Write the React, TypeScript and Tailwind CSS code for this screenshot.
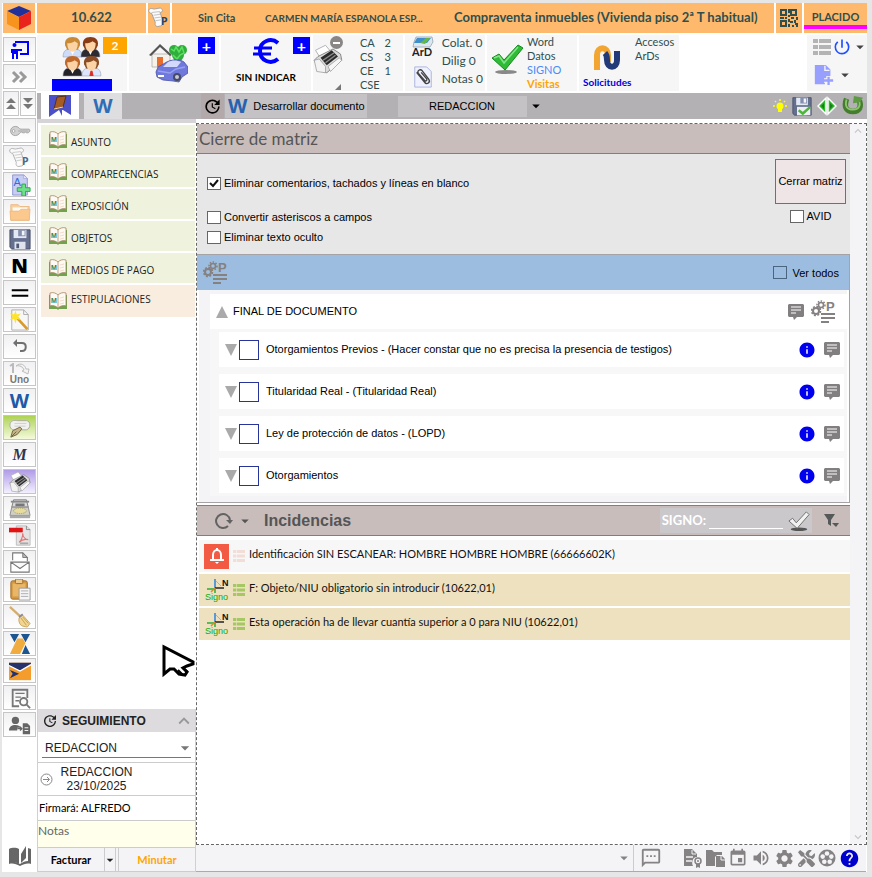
import React, { useState } from 'react';
import {
  MdArrowDropDown,
  MdEvent,
  MdHelp,
  MdInfo,
  MdKeyboardArrowDown,
  MdKeyboardArrowUp,
  MdOutlineSms,
  MdPowerSettingsNew,
  MdSettings,
  MdUpdate,
  MdVolumeUp,
} from 'react-icons/md';
import { FaTools } from 'react-icons/fa';

/* ---------- icons ---------- */

function Svg({ size = 22, box = 24, className = '', children }: {
  size?: number;
  box?: number;
  className?: string;
  children: React.ReactNode;
}) {
  return (
    <svg width={size} height={size} viewBox={`0 0 ${box} ${box}`} className={`shrink-0 ${className}`} aria-hidden="true">
      {children}
    </svg>
  );
}

const CubeIcon = () => (
  <Svg size={26} box={26}>
    <path d="M1 6 13 1l12 5-12 6z" fill="#22309a" />
    <path d="M1 6l12 6v13L1 19z" fill="#f7941d" />
    <path d="M25 6l-12 6v13l12-6z" fill="#e8241d" />
  </Svg>
);

const ScrollP = ({ size = 22, faded = false }: { size?: number; faded?: boolean }) => (
  <Svg size={size} className={faded ? 'opacity-80' : ''}>
    <path d="M1 3c2-3 5 0 7-1 3 0 5-2 7 0s0 4-2 4l4 10c0 3-2 5-5 5-3 1-5-1-4-4L4 7C2 7 0 5 1 3z" fill="#fbfbfb" stroke="#9c9c9c" strokeWidth="1" />
    <path d="M4 6l9-1M6 9l7-1M7 12l7-1M8 15l6-1" stroke="#bdbdbd" strokeWidth="1" fill="none" />
    <text x="14" y="20" fontSize="12" fontWeight="700" fontFamily="Open Sans, sans-serif" fill="#1d4a78">P</text>
  </Svg>
);

const QrIcon = () => (
  <Svg size={20} box={20} className="text-[#2f4f4f]">
    <g fill="none" stroke="currentColor" strokeWidth="2">
      <path d="M2 2h5v5H2zM12 2h5v5h-5zM2 13h5v5H2z" />
    </g>
    <path d="M9 1h2v4H9zM9 7h2v2H9zM1 9h4v2H1zM6 9h2v2H6zM12 9h3v2h-3zM17 9h2v3h-2zM9 11h2v3H9zM11 13h3v2h-3zM15 12h2v3h-2zM9 16h2v3H9zM13 17h2v2h-2zM16 15h3v2h-3zM17 17h2v2h-2z" fill="currentColor" />
  </Svg>
);

const PresenterIcon = () => (
  <Svg size={20} box={20} className="text-[#0000ff]">
    <path d="M6 3V2h12v12h-8" fill="none" stroke="currentColor" strokeWidth="2" />
    <circle cx="4.500" cy="5" r="2" fill="currentColor" />
    <path d="M1 9h11v2H8v8H6v-5H4v5H2v-6H1z" fill="currentColor" />
  </Svg>
);

const FastIcon = () => (
  <Svg size={20} box={20}>
    <path d="M3 5l5 5-5 5M10 5l5 5-5 5" fill="none" stroke="#999" strokeWidth="3" />
  </Svg>
);

const DoubleUp = () => (
  <Svg size={12} box={12}>
    <path d="M6 0l5 5H1zM6 6l5 5H1z" fill="#777" />
  </Svg>
);

const DoubleDown = () => (
  <Svg size={12} box={12}>
    <path d="M1 0h10L6 5zM1 6h10l-5 5z" fill="#777" />
  </Svg>
);

const KeyIcon = () => (
  <Svg>
    <path d="M7 7c4 0 4 3 6 3h9l1 2-2 2h-2l-1-1-1 1h-2l-1-1c-2 0-3 4-7 4-7 0-7-10 0-10z" fill="#d2d2d2" stroke="#999" strokeWidth=".9" />
    <circle cx="5" cy="12" r="1.500" fill="#fff" stroke="#999" strokeWidth=".8" />
    <path d="M10 12h11" stroke="#a5a5a5" />
  </Svg>
);

const DocAddIcon = () => (
  <Svg>
    <path d="M4 1h12l4 4v18H4z" fill="#c8cdf2" stroke="#8b92cf" />
    <path d="M16 1v4h4z" fill="#eef" stroke="#8b92cf" strokeWidth=".6" />
    <text x="5" y="13" fontSize="12" fontFamily="Liberation Sans, sans-serif" fill="#2c6fe0">A</text>
    <path d="M14 11h4v4h5v4h-5v5h-4v-5H9v-4h5z" fill="#6fe089" stroke="#2ba34c" />
  </Svg>
);

const FolderIcon = () => (
  <Svg>
    <path d="M2 4h8l2 2h10v15H2z" fill="#f9d0a0" stroke="#eab981" />
    <path d="M4 7h16v6H4z" fill="#fffaf2" />
    <path d="M1 11h10l2-2h10l-1 12H2z" fill="#fbc88e" stroke="#edb377" strokeWidth=".7" />
  </Svg>
);

const FloppyIcon = ({ check = false, size = 22 }: { check?: boolean; size?: number }) => (
  <Svg size={size}>
    <path d="M1 2h22v21H3l-2-2z" fill="#65708f" stroke="#454d68" />
    <path d="M5 2h14v9H5z" fill="#e3e8f5" />
    <path d="M10 2h8v7h-8z" fill="#8590ae" />
    <path d="M14 3h3v5h-3z" fill="#f3f5fb" />
    <path d="M6 15h12v8H6z" fill="#dfe3ee" />
    <path d="M8 17h3v5H8z" fill="#505976" />
    {check && (
      <>
        <path d="M6 13h16v10H6z" fill="#eceef2" />
        <path d="M8 17l5 4 9-8" fill="none" stroke="#4db53a" strokeWidth="3" />
      </>
    )}
  </Svg>
);

const WandIcon = () => (
  <Svg>
    <path d="M3 1h13l5 5v17H3z" fill="#f7f7f7" stroke="#aaa" />
    <path d="M16 1v5h5" fill="none" stroke="#aaa" />
    <path d="M9 10l11 12" stroke="#d99a2b" strokeWidth="3" />
    <path d="M7 2l1.500 4 4.500-1-3 3.500 3 3.500-4.500-1L7 16l-1.500-5L1 12l3-3.500L1 5l4.500 1z" fill="#ffe324" />
  </Svg>
);

const UndoIcon = () => (
  <Svg size={20} box={20}>
    <path d="M5 6h7c5 0 5 8 0 8h-2" fill="none" stroke="#707070" strokeWidth="2" />
    <path d="M3 6l4-4v8z" fill="#707070" />
  </Svg>
);

const UnoIcon = () => (
  <span className="relative flex h-[22px] w-[22px] items-end justify-center font-['Liberation_Sans'] text-[10px] leading-[11px] font-bold text-[#777]">
    <svg width="22" height="12" viewBox="0 0 22 12" className="absolute top-0 left-0" aria-hidden="true">
      <path d="M1 3l3-2v9" fill="none" stroke="#bbb" strokeWidth="2" />
      <path d="M7 3c5-4 9-1 10 3l3 0-1 5-6-3 2-1c-1-3-4-5-8-4z" fill="#f2f2f2" stroke="#bdbdbd" />
    </svg>
    Uno
  </span>
);

const GloveIcon = () => (
  <Svg>
    <path d="M1 9c0-5 5-6 8-5h10c5 0 5 9 0 10h-5l-4 0c-4 1-9 0-9-5z" fill="#f1f1ee" stroke="#a8a8a0" />
    <path d="M6 7h13M6 10h12" stroke="#ccc" />
    <path d="M12 11l2 2-5 6-7 3 2-7z" fill="#c4b48a" stroke="#6e613c" />
    <path d="M3 21l5-5" stroke="#6e613c" />
  </Svg>
);

const PrinterIcon = ({ size = 22 }: { size?: number }) => (
  <Svg size={size}>
    <path d="M2 5l8-4 5 6-8 6z" fill="#fff" stroke="#aaa" strokeWidth=".7" />
    <path d="M1 13l3-3 12-6 6 4 1 5-12 10-6-2z" fill="#dcdcdc" stroke="#888" strokeWidth=".8" />
    <path d="M6 11l9-6 5 5-9 7z" fill="#2b2b2b" />
    <path d="M8 13l9-6M10 15l8-6" stroke="#8c8c8c" strokeWidth="1.200" />
    <path d="M12 18l9-7 2 2-9 9z" fill="#f7f7f7" stroke="#999" strokeWidth=".6" />
    <path d="M1 13l4-1 5 6v5l-7-1z" fill="#f3f3f3" stroke="#999" strokeWidth=".6" />
  </Svg>
);

const TypewriterIcon = () => (
  <Svg>
    <path d="M5 2h14l2 8H3z" fill="#dadada" stroke="#777" />
    <path d="M2 4h20" stroke="#888" strokeWidth="2" />
    <path d="M7 6h10v3H7z" fill="#777" />
    <path d="M3 10h18l2 9H1z" fill="#d0d0c6" stroke="#888" />
    <ellipse cx="12" cy="14" rx="7" ry="3" fill="#e7dc9b" stroke="#9c9362" strokeDasharray="1 1" />
    <path d="M1 19h22v3H1z" fill="#a9a9a9" />
  </Svg>
);

const PdfIcon = () => (
  <Svg>
    <path d="M8 1h11l4 4v17H8z" fill="#e4e4e4" stroke="#bbb" />
    <path d="M19 1v4h4" fill="none" stroke="#888" />
    <path d="M0 3h15v5H0z" fill="#e01414" />
    <path d="M11 19c3-3 4-7 4-10 0 4 3 7 6 7-4-1-7 0-10 3z" fill="none" stroke="#e07878" strokeWidth="1.200" />
    <path d="M12 19h9v2h-9z" fill="#aaa" />
  </Svg>
);

const MailDocIcon = () => (
  <Svg>
    <path d="M4 9V1h11l5 5v4" fill="#fff" stroke="#777" strokeWidth="1.200" />
    <path d="M15 1v5h5z" fill="#bbb" stroke="#777" />
    <path d="M2 11h20v11H2zM2 11l10 7 10-7" fill="#fff" stroke="#777" strokeWidth="1.200" />
  </Svg>
);

const ClipboardIcon = () => (
  <Svg>
    <rect x="2" y="2" width="18" height="20" rx="2" fill="#d59a44" stroke="#9c6a21" />
    <path d="M4 5h14v14H4z" fill="#e9b566" />
    <rect x="7" y="0" width="8" height="5" rx="1" fill="#f0c98b" stroke="#9c6a21" />
    <path d="M11 10h12v13H11z" fill="#f5f5f7" stroke="#999" />
    <path d="M13 13h8M13 16h8M13 19h8" stroke="#aaa" />
  </Svg>
);

const BroomIcon = () => (
  <Svg>
    <path d="M1 1l13 12" stroke="#d5ae6c" strokeWidth="2.500" />
    <path d="M11 13l4-3 8 9-3 4-5-1c-3-1-5-5-4-9z" fill="#f1d691" stroke="#bd9345" strokeWidth=".8" />
    <path d="M13 13l6 8M15 12l6 7" stroke="#c79c4a" />
    <path d="M11 12l4-3" stroke="#8a8a9a" strokeWidth="2" />
  </Svg>
);

const HourglassIcon = () => (
  <Svg>
    <path d="M1 1h10L6 10zM13 1h10l-5 9z" fill="#1d5591" />
    <path d="M9 6h6l3 5-6 12H1z" fill="#f0ac3f" />
    <path d="M18 13l5 10H14z" fill="#1d5591" />
  </Svg>
);

const EnvelopeIcon = () => (
  <Svg>
    <path d="M0 3h24v19H0z" fill="#f59d2c" />
    <path d="M0 3h24v2l-12 7L0 6z" fill="#25326c" />
    <path d="M0 6l12 6 12-7" stroke="#fff" strokeWidth="1.500" fill="none" />
    <path d="M1 11l10 4-10 5 3-5z" fill="#25326c" />
  </Svg>
);

const SearchDocIcon = () => (
  <Svg className="text-[#777]">
    <path d="M11 21H4V3h16v9" fill="none" stroke="currentColor" strokeWidth="2" />
    <path d="M7 7h10M7 11h6M7 15h4" stroke="currentColor" strokeWidth="1.500" />
    <circle cx="16" cy="16" r="4" fill="none" stroke="currentColor" strokeWidth="2" />
    <path d="M19 19l4 4" stroke="currentColor" strokeWidth="2" />
  </Svg>
);

const UserDocIcon = () => (
  <Svg className="text-[#666]">
    <circle cx="7" cy="7" r="4" fill="currentColor" />
    <path d="M0 18c0-4 3-6 7-6 3 0 5 1 6 3H9v3z" fill="currentColor" />
    <path d="M9 16h5M12 14l2 2-2 2" stroke="currentColor" strokeWidth="1.500" fill="none" />
    <path d="M15 10h5l3 3v9h-8z" fill="currentColor" />
    <path d="M17 15h4M17 18h4" stroke="#fff" strokeWidth="1" />
  </Svg>
);

const BookIcon = () => (
  <Svg size={24} box={24}>
    <path d="M1 5c4-2 8-1 10 0v15c-3-2-6-2-10-1z" fill="#666" />
    <path d="M13 10l5-8v12l-5 5z" fill="#666" />
    <path d="M20 4l3 1v15c-4-1-7 0-11 2-4-2-7-3-11-2v-2c4-1 7 0 11 2 3-2 5-3 8-3z" fill="#666" />
  </Svg>
);

function Person({ x, y, hair, body }: { x: number; y: number; hair: string; body: string }) {
  return (
    <g transform={`translate(${x} ${y})`}>
      <path d="M0 19c0-6 3-8 9-8s9 2 9 8z" fill={body} stroke="#8b95b0" strokeWidth=".5" />
      <path d="M6 11l3 6 3-6z" fill="#fff" />
      <path d="M2 8c-1-5 2-8 7-8s8 3 7 8l-2 4H4z" fill={hair} />
      <path d="M4 6c3 0 6-1 7-2l3 2c0 5-2 8-5 8s-5-3-5-8z" fill="#fbd3a4" />
    </g>
  );
}

const PeopleIcon = () => (
  <svg width="40" height="40" viewBox="0 0 38 38" aria-hidden="true">
    <Person x={1} y={0} hair="#c98a35" body="#cddcf8" />
    <Person x={18} y={0} hair="#8a3c15" body="#2b2b30" />
    <Person x={1} y={18} hair="#c0672a" body="#232328" />
    <Person x={19} y={18} hair="#8a4d25" body="#dbe5fb" />
    <path d="M27 32h2l1 5h-4z" fill="#d9302b" />
  </svg>
);

const HouseCarIcon = () => (
  <svg width="40" height="40" viewBox="0 0 40 40" aria-hidden="true">
    <path d="M28 10h4v12h-4z" fill="#8a5a2a" />
    <g fill="#2fae3c">
      <circle cx="26" cy="7" r="5" />
      <circle cx="34" cy="7" r="5" />
      <circle cx="30" cy="12" r="6" />
    </g>
    <path d="M23 6l3 2 2-4 3 5 3-5 2 6-4 2-3 4-4-4" fill="none" stroke="#5ce061" strokeWidth="1.500" />
    <path d="M4 11h18v13H4z" fill="#f6f2ea" stroke="#999" strokeWidth=".6" />
    <path d="M1 12L12 1l12 11-2 1L12 4 3 13z" fill="#555" />
    <path d="M9 14h6v10H9z" fill="#e86d2b" />
    <path d="M8 29l2-5 7-4c6-4 15-4 19-1l4 5v6l-6 4-3 5-6-1-10-1-6-3z" fill="#6f79dc" stroke="#4a52a6" strokeWidth=".8" />
    <path d="M15 24l5-5c4-2 9-2 13 0l-4 5z" fill="#d3d9fa" />
    <path d="M10 28l12 2 6-4 9-2" stroke="#98a0f0" strokeWidth="1.500" fill="none" />
    <circle cx="29" cy="34" r="4" fill="#454a66" />
    <circle cx="29" cy="34" r="2" fill="#c8c8d5" />
    <path d="M10 32h6v2h-6z" fill="#fff" />
  </svg>
);

const EuroIcon = () => (
  <svg width="28" height="26" viewBox="0 0 28 26" aria-hidden="true">
    <path d="M26 5C19-1 8 3 8 13s11 14 18 8" fill="none" stroke="#0000ff" strokeWidth="4" />
    <path d="M2 10h18M1 16h18" stroke="#0000ff" strokeWidth="3" />
  </svg>
);

const ArdIcon = () => (
  <svg width="22" height="24" viewBox="0 0 22 24" aria-hidden="true">
    <path d="M4 1h16l1 5-3 5H1l1-5z" fill="#dfe7ee" stroke="#8899a6" strokeWidth=".7" />
    <path d="M5 2h14l-4 5H2z" fill="#3e8fcb" />
    <path d="M8 7l6-5 4 0-5 6z" fill="#67b843" />
    <text x="0" y="20" fontSize="11" fontWeight="700" fontFamily="Lato, sans-serif" fill="#222">ArD</text>
  </svg>
);

const ClipIcon = () => (
  <Svg size={22}>
    <path d="M3 1h13l5 5v17H3z" fill="#eff1ff" stroke="#a9b0dc" />
    <path d="M5 7l9 11c2 3 7 0 4-4L11 5C9 3 5 5 7 8l7 8c1 1 3 0 2-2l-6-7" fill="none" stroke="#444" strokeWidth="1.500" />
  </Svg>
);

const GreenCheck = () => (
  <svg width="34" height="32" viewBox="0 0 34 32" aria-hidden="true">
    <ellipse cx="15" cy="29" rx="11" ry="2" fill="#888" />
    <path d="M1 15l7-4 5 6L27 2l5 3-18 22z" fill="#2fbb35" stroke="#168a20" />
    <path d="M3 15l5-2 5 7L27 4" fill="none" stroke="#86e58a" strokeWidth="1.500" />
  </svg>
);

const SolicitudesIcon = () => (
  <svg width="28" height="28" viewBox="0 0 28 28" aria-hidden="true">
    <path d="M4 27V12c0-9 11-9 11 0v7" fill="none" stroke="#f2a531" strokeWidth="6" />
    <path d="M12 10c2 2 2 4 2 7 0 9 10 9 10 0V8" fill="none" stroke="#223a78" strokeWidth="6" />
  </svg>
);

const ListIcon = ({ color, small = false }: { color: string; small?: boolean }) => (
  <svg width={small ? 12 : 18} height={small ? 12 : 16} viewBox="0 0 18 16" preserveAspectRatio="none" aria-hidden="true" className="shrink-0">
    <path d="M0 0h5v4H0zM6 0h12v4H6zM0 6h5v4H0zM6 6h12v4H6zM0 12h5v4H0zM6 12h12v4H6z" fill={color} />
  </svg>
);

const NoteAddIcon = () => (
  <Svg size={22}>
    <path d="M2 1h12l5 5v7h-3v4h-3v5H2z" fill="#98a0ff" />
    <path d="M13 2v5h5" fill="none" stroke="#f5f5f7" strokeWidth="1.500" />
    <path d="M17 13v10M12 18h10" stroke="#f6f6f6" strokeWidth="5" />
    <path d="M17 14v9M12 18h10" stroke="#98a0ff" strokeWidth="2.500" />
  </Svg>
);

const BookTabIcon = () => (
  <svg width="22" height="24" viewBox="0 0 22 24" aria-hidden="true">
    <path d="M0 1h22v20l-8-5h-4L0 23z" fill="#4b50c9" />
    <path d="M10 16h3v6z" fill="#4b50c9" />
    <path d="M8 3l9-1-3 11-9 2z" fill="#a55b22" stroke="#5c3011" strokeWidth="1" />
    <path d="M5 15l9-2" stroke="#f5d8b0" />
  </svg>
);

const BulbIcon = () => (
  <Svg size={16} box={16}>
    <circle cx="8" cy="8" r="3.500" fill="#ffff00" />
    <path d="M6 10h4v4H6z" fill="#ffff00" />
    <path d="M8 1v2M1 8h2M13 8h2M3 3l1 1M13 3l-1 1" stroke="#ffff00" strokeWidth="1.500" />
  </Svg>
);

const SplitIcon = () => (
  <Svg size={20} box={20}>
    <path d="M9 2v16L1 10zM11 2v16l8-8z" fill="#2eb82e" stroke="#fff" strokeWidth="1.500" />
    <path d="M7 7v6l-3-3zM13 7v6l3-3z" fill="#168016" />
  </Svg>
);

const LoopIcon = () => (
  <Svg size={22}>
    <path d="M5 4c-3 8-1 14 7 14s9-6 7-12" fill="none" stroke="#437d2d" strokeWidth="6" />
    <path d="M5 5c-2 7 0 11 7 11s8-5 7-9" fill="none" stroke="#8cc66c" strokeWidth="2" />
    <path d="M12 9l1-8 10 2-4 5z" fill="#5d9b43" />
  </Svg>
);

const GearsP = ({ size = 24 }: { size?: number }) => (
  <Svg size={size} className="text-[#858181]">
    <g fill="none" stroke="currentColor">
      <circle cx="5" cy="11" r="3" strokeWidth="2" />
      <circle cx="5" cy="11" r="4.500" strokeWidth="1.500" strokeDasharray="2 1.500" />
      <circle cx="10" cy="5" r="2.500" strokeWidth="1.500" />
      <circle cx="10" cy="5" r="4" strokeWidth="1.500" strokeDasharray="1.500 1.500" />
      <path d="M10 14h14M10 18h14M10 22h8" strokeWidth="2" />
    </g>
    <text x="15" y="11" fontSize="13" fontWeight="700" fontFamily="Liberation Sans, sans-serif" fill="currentColor">P</text>
  </Svg>
);

const CommentIcon = () => (
  <Svg size={16} box={16}>
    <path d="M1 0h14l1 1v11l-1 1H9l-3 3-1-3H1l-1-1V1z" fill="#827f80" />
    <path d="M3 3h10M3 6h10M3 9h5" stroke="#fff" strokeWidth="1" />
  </Svg>
);

const MenuBookIcon = () => (
  <Svg size={18} box={18}>
    <path d="M0 3c3-1 6-1 9 0 3-1 6-1 9 0v14l-8 0-1 1-1-1H0z" fill="#71a34e" />
    <path d="M1 1c3-1 6 0 8 2 2-2 5-3 8-2v13c-3-1-6 0-8 2-2-2-5-3-8-2z" fill="#fffaf3" stroke="#a68467" strokeWidth=".8" />
    <path d="M9 3v12" stroke="#c0a080" />
    <path d="M11 6l4-1M11 9l4-1M11 12l4-1" stroke="#f3dccb" />
    <text x="2" y="11" fontSize="7" fontWeight="700" fontFamily="Liberation Sans, sans-serif" fill="#40803e">M</text>
  </Svg>
);

const BellIcon = () => (
  <span className="flex h-[25px] w-[25px] items-center justify-center bg-[#f25a44]">
    <Svg size={16} box={16}>
      <path d="M4 12V7c0-3 2-5 4-5s4 2 4 5v5z" fill="none" stroke="#fff" strokeWidth="2" />
      <path d="M1 12h14M8 0v3" stroke="#fff" strokeWidth="2" />
      <path d="M6 14h4l-2 2z" fill="#fff" />
    </Svg>
  </span>
);

const SignoIcon = () => (
  <Svg size={25} box={25}>
    <path d="M11 1v9" stroke="#2a7fe0" strokeWidth="1.500" />
    <path d="M11 10h9" stroke="#222" strokeWidth="1.500" />
    <path d="M3 11h8M11 10v5" stroke="#2eaa38" strokeWidth="1.500" />
    <path d="M11 10l-4 4" stroke="#e0862b" strokeWidth="1.500" />
    <path d="M12 3l5 5" stroke="#9fb3cf" />
    <text x="18" y="8" fontSize="9" fontWeight="700" fontFamily="Liberation Sans, sans-serif" fill="#111">N</text>
    <text x="1" y="22" fontSize="9" fontFamily="Liberation Sans, sans-serif" fill="#00b020">Signo</text>
  </Svg>
);

const SilverCheck = () => (
  <Svg size={22}>
    <ellipse cx="12" cy="21" rx="9" ry="2" fill="#555" />
    <path d="M1 12l4-3 4 5L20 2l3 3-13 15z" fill="#f1f1f1" stroke="#6a6a6a" />
  </Svg>
);

const FilterIcon = () => (
  <Svg size={16} box={16} className="text-[#55595a]">
    <path d="M0 1h11L7 7v6l-3-2V7z" fill="currentColor" />
    <path d="M8 10h7l-3 4z" fill="currentColor" />
  </Svg>
);

const ReloadIcon = () => (
  <Svg size={18} box={18}>
    <path d="M13 14A7 7 0 1 1 15 8" fill="none" stroke="#626262" strokeWidth="2" />
    <path d="M11 8h7l-3 4z" fill="#626262" />
  </Svg>
);

const CertIcon = () => (
  <Svg size={20} box={20} className="text-[#858283]">
    <path d="M1 1h8l5 5v3c-4 0-6 5-4 9H1z" fill="currentColor" />
    <path d="M3 9h7M3 13h6" stroke="#f4f3f6" strokeWidth="1.500" />
    <path d="M9 2v4h4" fill="none" stroke="#f4f3f6" />
    <circle cx="15" cy="13" r="3" fill="none" stroke="currentColor" strokeWidth="1.500" />
    <circle cx="15" cy="13" r="1" fill="currentColor" />
    <path d="M13 16v4l2-1 2 1v-4" fill="currentColor" />
  </Svg>
);

const FoldersIcon = () => (
  <Svg size={20} box={20} className="text-[#858283]">
    <path d="M0 2h6l2 2h8v3h-5l-2 2v9H0z" fill="currentColor" />
    <path d="M10 8h6l3 3v8h-9z" fill="currentColor" />
    <path d="M15 8v4h4" stroke="#f4f3f6" fill="none" />
  </Svg>
);

const ReelIcon = () => (
  <Svg size={18} box={18}>
    <circle cx="9" cy="9" r="8.500" fill="#858283" />
    <g fill="#f4f3f6">
      <circle cx="9" cy="4.500" r="2.300" />
      <circle cx="13.300" cy="7.600" r="2.300" />
      <circle cx="11.700" cy="12.700" r="2.300" />
      <circle cx="6.300" cy="12.700" r="2.300" />
      <circle cx="4.700" cy="7.600" r="2.300" />
    </g>
  </Svg>
);

const Caret = () => <MdArrowDropDown size={18} className="shrink-0 text-[#444]" />;

/* ---------- data ---------- */

const railItems = [
  { label: 'Clave', icon: <KeyIcon /> },
  { label: 'Protocolo', icon: <ScrollP faded /> },
  { label: 'Añadir texto', icon: <DocAddIcon /> },
  { label: 'Abrir', icon: <FolderIcon /> },
  { label: 'Guardar', icon: <FloppyIcon /> },
  { label: 'Negrita', icon: <span className="font-['Open_Sans'] text-[20px] leading-none font-extrabold text-black">N</span> },
  { label: 'Línea doble', icon: <Svg><path d="M3 9h18M3 15h18" stroke="#000" strokeWidth="2" /></Svg> },
  { label: 'Asistente', icon: <WandIcon /> },
  { label: 'Deshacer', icon: <UndoIcon /> },
  { label: 'Uno', icon: <UnoIcon /> },
  { label: 'Word', icon: <span className="font-['Open_Sans'] text-[20px] leading-none font-bold text-[#2059a8]">W</span> },
  { label: 'Firma', icon: <GloveIcon />, bg: 'bg-linear-to-b from-[#aed24f] to-[#f5fadb]' },
  { label: 'Matriz', icon: <span className="font-['Liberation_Serif'] text-[16px] leading-none font-bold text-[#2d3650] italic">M</span> },
  { label: 'Imprimir', icon: <PrinterIcon />, bg: 'bg-linear-to-b from-[#b09be6] to-[#f4f0ff]' },
  { label: 'Escribir', icon: <TypewriterIcon /> },
  { label: 'PDF', icon: <PdfIcon /> },
  { label: 'Correo', icon: <MailDocIcon /> },
  { label: 'Pegar', icon: <ClipboardIcon /> },
  { label: 'Limpiar', icon: <BroomIcon /> },
  { label: 'Ancert', icon: <HourglassIcon /> },
  { label: 'Mensajería', icon: <EnvelopeIcon /> },
  { label: 'Buscar', icon: <SearchDocIcon /> },
  { label: 'Asignar', icon: <UserDocIcon /> },
];

const sections = ['ASUNTO', 'COMPARECENCIAS', 'EXPOSICIÓN', 'OBJETOS', 'MEDIOS DE PAGO', 'ESTIPULACIONES'];

const clauses = [
  'Otorgamientos Previos - (Hacer constar que no es precisa la presencia de testigos)',
  'Titularidad Real - (Titularidad Real)',
  'Ley de protección de datos - (LOPD)',
  'Otorgamientos',
];

const issues = [
  { text: 'Identificación SIN ESCANEAR: HOMBRE HOMBRE HOMBRE (66666602K)', alert: true },
  { text: 'F: Objeto/NIU obligatorio sin introducir (10622,01)', alert: false },
  { text: 'Esta operación ha de llevar cuantía superior a 0 para NIU (10622,01)', alert: false },
];

const copies = [
  ['CA', '2'],
  ['CS', '3'],
  ['CE', '1'],
  ['CSE', ''],
];

/* ---------- layout ---------- */

function RailButton({ label, bg, children }: { label: string; bg?: string; children: React.ReactNode }) {
  return (
    <button
      type="button"
      aria-label={label}
      className={`flex h-[25px] w-full items-center justify-center overflow-hidden border border-[#c6c6c6] ${bg ?? 'bg-linear-to-b from-[#f1f1f3] to-white'}`}
    >
      {children}
    </button>
  );
}

function CheckBox({ label, checked = false, blue = false }: { label: string; checked?: boolean; blue?: boolean }) {
  const [on, setOn] = useState(checked);

  return (
    <label className="flex items-center gap-[3px] leading-4">
      <span className="relative flex h-[13px] w-[14px]">
        <input
          type="checkbox"
          checked={on}
          onChange={(e) => setOn(e.target.checked)}
          className={`h-[13px] w-[14px] appearance-none border ${blue ? 'border-[#4a6580]' : 'border-[#666] bg-white'}`}
        />
        {on && (
          <svg viewBox="0 0 14 13" className="pointer-events-none absolute inset-0" aria-hidden="true">
            <path d="M3 6l3 3 5-6" fill="none" stroke="#111" strokeWidth="2" />
          </svg>
        )}
      </span>
      <span className={blue ? 'pl-[3px]' : ''}>{label}</span>
    </label>
  );
}

function TopBar() {
  return (
    <header className="flex h-[30px] gap-[2px] bg-white pl-px font-['Lato'] font-bold text-[#2f4f4f]">
      <button type="button" aria-label="Inicio" className="flex w-8 shrink-0 items-center justify-center bg-[#ffb96c]">
        <CubeIcon />
      </button>
      <div className="flex w-[109px] shrink-0 items-center justify-center bg-[#ffb96c] text-[13px]">10.622</div>
      <button type="button" aria-label="Protocolo" className="flex w-[22px] shrink-0 items-center justify-center bg-[#ffb96c]">
        <ScrollP />
      </button>
      <div className="flex min-w-0 flex-1 items-center bg-[#ffb96c] pl-[26px]">
        <span className="w-[67px] shrink-0 text-[11px]">Sin Cita</span>
        <span className="w-[189px] shrink-0 text-[10px]">CARMEN MARÍA ESPANOLA ESP...</span>
        <span className="truncate text-[13px]">Compraventa inmuebles (Vivienda piso 2ª T habitual)</span>
      </div>
      <button type="button" aria-label="Código QR" className="flex w-[26px] shrink-0 items-center justify-center bg-[#ffb96c]">
        <QrIcon />
      </button>
      <div className="flex w-[63px] shrink-0 flex-col bg-[#ffb96c] text-[11px]">
        <span className="flex h-[22px] items-end justify-center leading-4">PLACIDO</span>
        <span className="h-1 bg-[#ff00ff]" />
      </div>
    </header>
  );
}

function Ribbon() {
  return (
    <div className="flex h-14 gap-[2px] bg-white font-['Lato'] text-[11px] leading-[14px] text-[#2f4f4f]">
      <div className="relative flex w-[90px] shrink-0 flex-col items-center bg-[#f6f6f6] pt-[2px]">
        <PeopleIcon />
        <span className="mt-[2px] h-3 w-[60px] bg-[#0000ff]" />
        <span className="absolute top-[2px] right-0 flex h-[17px] w-6 items-center justify-center bg-[#ffa500] text-[12px] font-bold text-white">2</span>
      </div>
      <div className="relative flex w-[90px] shrink-0 justify-center bg-[#f6f6f6] pt-2 pr-3">
        <HouseCarIcon />
        <button type="button" aria-label="Añadir bien" className="absolute top-[2px] right-1 flex h-[17px] w-[17px] items-center justify-center bg-[#0000ff] text-[16px] font-bold text-white">+</button>
      </div>
      <div className="relative flex w-[90px] shrink-0 flex-col items-center bg-[#f6f6f6] pt-[3px] font-bold text-black">
        <EuroIcon />
        <span className="mt-[6px] text-[10px]">SIN INDICAR</span>
        <button type="button" aria-label="Añadir importe" className="absolute top-[2px] right-[1px] flex h-[17px] w-[17px] items-center justify-center bg-[#0000ff] text-[16px] text-white">+</button>
      </div>
      <div className="relative flex w-[90px] shrink-0 bg-[#f6f6f6] pt-[1px]">
        <div className="w-[47px] pt-2"><PrinterIcon size={30} /></div>
        <span className="absolute top-[1px] left-[17px] flex h-[13px] w-[13px] items-center justify-center rounded-full bg-[#8a8686]">
          <span className="h-[2px] w-[7px] bg-white" />
        </span>
        <Svg size={6} box={6} className="absolute bottom-px left-[22px]"><path d="M6 0v6H0z" fill="#777" /></Svg>
        <dl className="w-[31px]">
          {copies.map(([name, count]) => (
            <div key={name} className="flex justify-between">
              <dt>{name}</dt>
              <dd>{count}</dd>
            </div>
          ))}
        </dl>
      </div>
      <div className="flex w-20 shrink-0 justify-between bg-[#f6f6f6] pt-px pr-[2px] pl-[7px] text-[12px]">
        <div className="flex flex-col gap-[6px]">
          <ArdIcon />
          <ClipIcon />
        </div>
        <div className="flex flex-col gap-1">
          <span>Colat. 0</span>
          <span>Dilig 0</span>
          <span>Notas 0</span>
        </div>
      </div>
      <div className="flex w-[90px] shrink-0 bg-[#f6f6f6] pl-1">
        <div className="w-9 pt-2"><GreenCheck /></div>
        <div className="flex flex-col">
          <span>Word</span>
          <span>Datos</span>
          <span className="text-[#4a8cf5]">SIGNO</span>
          <span className="font-bold text-[#ffa500]">Visitas</span>
        </div>
      </div>
      <div className="flex w-[100px] shrink-0 bg-[#f6f6f6] pl-1">
        <div className="flex w-[52px] flex-col pt-2">
          <span className="pl-[10px]"><SolicitudesIcon /></span>
          <a href="#solicitudes" className="pt-1 text-[10px] font-bold text-[#0000dd]">Solicitudes</a>
        </div>
        <div className="flex flex-col">
          <span>Accesos</span>
          <span>ArDs</span>
        </div>
      </div>
      <div className="flex-1" />
      <div className="flex w-[60px] shrink-0 flex-col gap-[6px] bg-[#f6f6f6] pt-[2px] pl-[6px]">
        <div className="flex h-5 items-center">
          <ListIcon color="#b4b4b4" />
          <MdPowerSettingsNew size={20} className="ml-px shrink-0 text-[#2050ff]" />
          <MdArrowDropDown size={18} className="-ml-px shrink-0 text-[#444]" />
        </div>
        <div className="flex h-6 items-center gap-px">
          <NoteAddIcon />
          <Caret />
        </div>
      </div>
    </div>
  );
}

function ToolStrip() {
  return (
    <div className="flex h-[26px] items-stretch bg-[#b3b1b4] pl-1 font-['Liberation_Sans'] text-[11px] text-black">
      <button type="button" aria-label="Libro" className="flex w-[38px] items-center justify-center bg-white"><BookTabIcon /></button>
      <button type="button" aria-label="Word" className="ml-[5px] flex w-[38px] items-center justify-center bg-[#dedee0] font-['Open_Sans'] text-[20px] font-bold text-[#2f6db5]">W</button>
      <button type="button" aria-label="Actualizar" className="ml-[79px] flex w-[23px] items-center justify-center bg-[#b3a9ab]"><MdUpdate size={19} /></button>
      <button type="button" className="ml-px flex h-6 w-[142px] items-center gap-[6px] self-center bg-[#c4c2c5] pl-[3px]">
        <span className="font-['Open_Sans'] text-[20px] leading-none font-bold text-[#2762b0]">W</span>
        Desarrollar documento
      </button>
      <label className="relative ml-[31px] flex w-[150px] items-center">
        <select aria-label="Estado" className="h-[21px] w-[129px] appearance-none bg-[#c4c2c5] pl-[31px]">
          <option>REDACCION</option>
        </select>
        <MdArrowDropDown size={18} className="pointer-events-none" />
      </label>
      <div className="flex-1" />
      <div className="flex items-center gap-1 pr-[3px]">
        <button type="button" aria-label="Sugerencias"><BulbIcon /></button>
        <button type="button" aria-label="Guardar cambios"><FloppyIcon check size={20} /></button>
        <button type="button" aria-label="Dividir" className="pl-px"><SplitIcon /></button>
        <button type="button" aria-label="Recargar" className="pl-px"><LoopIcon /></button>
      </div>
    </div>
  );
}

function SidePanel() {
  return (
    <aside className="flex w-[159px] shrink-0 flex-col border-l border-[#d0d0d0] bg-white">
      <div className="h-1 bg-[#d6d4d7]" />
      <nav className="flex flex-col gap-[2px] pt-[2px] pr-px pl-[3px] font-['Open_Sans'] text-[10px] text-[#222]">
        {sections.map((name) => (
          <a
            key={name}
            href="#seccion"
            className={`flex items-center gap-1 pl-2 ${name === 'ESTIPULACIONES' ? 'h-8 bg-[#f8eddf]' : 'h-[30px] bg-[#eff2dd]'}`}
          >
            <MenuBookIcon />
            <span className={name === 'ESTIPULACIONES' ? 'pb-1' : 'pt-1'}>{name}</span>
          </a>
        ))}
      </nav>
      <div className="flex-1" />
      <div className="border-r border-[#d0d0d0] font-['Liberation_Sans'] text-[12px] leading-[14px] text-[#222]">
        <button type="button" className="flex h-[23px] w-full items-center bg-[#dddbde] pl-1 font-bold">
          <MdUpdate size={16} />
          <span className="ml-1 flex-1 text-left">SEGUIMIENTO</span>
          <MdKeyboardArrowUp size={22} className="text-[#999]" />
        </button>
        <label className="relative mx-1 mt-[6px] flex h-[20px] items-center border-b border-[#777]">
          <select aria-label="Fase" className="w-full appearance-none pl-[3px]">
            <option>REDACCION</option>
          </select>
          <MdArrowDropDown size={20} className="pointer-events-none absolute -right-1 text-[#777]" />
        </label>
        <div className="mt-1 flex h-[34px] items-center border-y-1 border-[#ccc] pl-[2px]">
          <Svg size={13} box={13} className="text-[#888]">
            <circle cx="6.500" cy="6.500" r="5.500" fill="none" stroke="currentColor" />
            <path d="M3 6.500h6M7 4l2.500 2.500L7 9" fill="none" stroke="currentColor" />
          </Svg>
          <p className="w-[80px] pl-[7px] text-center">REDACCION 23/10/2025</p>
        </div>
        <p className="flex h-[25px] items-center border-b border-[#ccc] pl-px font-['Lato'] text-[11px] text-black">Firmará: ALFREDO</p>
        <input aria-label="Notas" placeholder="Notas" className="block h-[26px] w-full bg-[#ffffec] pb-2 font-['Lato'] text-[12px] placeholder:text-[#666]" />
        <div className="flex h-[25px] border-y border-[#ccc] bg-[#f4f3f6] font-['Lato'] text-[11px] font-bold">
          <button type="button" className="w-[66px] text-black">Facturar</button>
          <button type="button" aria-label="Más opciones" className="flex w-3 items-center justify-center border-x border-[#ccc]"><MdArrowDropDown size={16} className="shrink-0" /></button>
          <button type="button" className="ml-[2px] flex-1 border-l border-[#ccc] text-[#ffa500]">Minutar</button>
        </div>
      </div>
    </aside>
  );
}

function ClosingForm() {
  return (
    <section>
      <h1 className="flex h-[30px] items-center border-b border-[#827d7f] bg-[#c8bdbb] pl-[2px] font-['Lato'] text-[17px] text-[#555]">Cierre de matriz</h1>
      <div className="flex h-[100px] justify-between bg-[#e7e7e7] pr-1 pl-[10px]">
        <div className="flex flex-col pt-[21px]">
          <CheckBox label="Eliminar comentarios, tachados y líneas en blanco" checked />
          <div className="mt-[18px] flex flex-col gap-1">
            <CheckBox label="Convertir asteriscos a campos" />
            <CheckBox label="Eliminar texto oculto" />
          </div>
        </div>
        <div className="flex flex-col items-center gap-1 pt-[5px]">
          <button type="button" className="h-[45px] w-[71px] border border-[#707070] bg-[#efe5e6]">Cerrar matriz</button>
          <CheckBox label="AVID" />
        </div>
      </div>
    </section>
  );
}

function Clauses() {
  return (
    <section className="border-y border-r border-[#a5a3a5] bg-[#f4f3f6]">
      <div className="flex h-[35px] items-center justify-between bg-[#9dbde0] pr-[10px] pl-[6px]">
        <GearsP />
        <CheckBox label="Ver todos" blue />
      </div>
      <div className="border-x-2 border-white pt-1 pb-[6px] pl-[11px]">
        <div className="flex h-[35px] items-center bg-white pr-3 pl-[6px]">
          <Svg size={12} box={12}><path d="M6 0l6 12H0z" fill="#aaa" /></Svg>
          <h2 className="flex-1 pl-[5px]">FINAL DE DOCUMENTO</h2>
          <button type="button" aria-label="Comentar"><CommentIcon /></button>
          <button type="button" aria-label="Opciones de párrafo" className="pl-[7px]"><GearsP /></button>
        </div>
        <ul className="bg-[#f7f7f7] py-[3px] pr-[3px] pl-[9px]">
          {clauses.map((text) => (
            <li key={text} className="mb-[7px] flex h-[35px] items-center bg-white pl-[6px] last:mb-0">
              <Svg size={12} box={12}><path d="M0 0h12L6 12z" fill="#aaa" /></Svg>
              <label className="flex flex-1 items-center">
                <input type="checkbox" className="ml-[2px] h-5 w-5 appearance-none border border-[#27359a] bg-white checked:bg-[#27359a]" />
                <span className="pl-[7px]">{text}</span>
              </label>
              <button type="button" aria-label="Información"><MdInfo size={18} className="text-[#0000ee]" /></button>
              <button type="button" aria-label="Comentar" className="pr-1 pl-2"><CommentIcon /></button>
            </li>
          ))}
        </ul>
      </div>
    </section>
  );
}

function Issues() {
  return (
    <section className="mt-[2px]">
      <div className="flex h-[31px] items-center border-y border-[#827d7f] bg-[#c8bdbb] pr-[10px] pl-[18px]">
        <button type="button" aria-label="Actualizar"><ReloadIcon /></button>
        <MdArrowDropDown size={18} className="ml-[3px] text-[#555]" />
        <h2 className="flex-1 pl-[10px] text-[16px] font-bold text-[#555]">Incidencias</h2>
        <label className="flex h-[25px] items-center bg-[#cbc8cb] pr-[2px] pl-[2px] font-['Lato'] text-[13px] font-bold text-white">
          SIGNO:
          <input type="text" className="mr-[5px] ml-[3px] h-[17px] w-[74px] border-b border-white bg-transparent" />
          <SilverCheck />
        </label>
        <button type="button" aria-label="Filtrar" className="pl-3"><FilterIcon /></button>
      </div>
      <ul className="flex flex-col gap-[2px] pt-1 pl-[2px] font-['Lato'] text-[11px] text-[#111]">
        {issues.map((issue) => (
          <li key={issue.text} className={`flex h-8 items-center gap-1 pl-[5px] ${issue.alert ? 'bg-[#f7f7f7]' : 'bg-[#eee1bf]'}`}>
            {issue.alert ? <BellIcon /> : <SignoIcon />}
            <ListIcon small color={issue.alert ? '#f3ddd7' : '#a5c764'} />
            <span className="pb-1">{issue.text}</span>
          </li>
        ))}
      </ul>
    </section>
  );
}

function StatusBar() {
  return (
    <footer className="mr-px flex h-[27px] border-b border-[#aaa] bg-[#f4f3f6] text-[#858283]">
      <label className="relative flex flex-1 items-center border-r border-[#ccc]">
        <select aria-label="Estado de la operación" className="h-full w-full appearance-none" />
        <MdArrowDropDown size={18} className="pointer-events-none absolute right-0" />
      </label>
      <div className="flex w-[232px] items-center pl-[6px]">
        <button type="button" aria-label="Mensajes"><MdOutlineSms size={22} /></button>
        <div className="flex flex-1 items-center justify-end gap-[2px] pr-[6px]">
          <button type="button" aria-label="Certificado"><CertIcon /></button>
          <button type="button" aria-label="Carpetas" className="pl-px"><FoldersIcon /></button>
          <button type="button" aria-label="Agenda"><MdEvent size={20} /></button>
          <button type="button" aria-label="Sonido" className="px-px"><MdVolumeUp size={20} /></button>
          <button type="button" aria-label="Ajustes"><MdSettings size={21} /></button>
          <button type="button" aria-label="Herramientas" className="pl-px"><FaTools size={17} /></button>
          <button type="button" aria-label="Vídeos" className="px-px"><ReelIcon /></button>
          <button type="button" aria-label="Ayuda"><MdHelp size={21} className="text-[#0000cc]" /></button>
        </div>
      </div>
    </footer>
  );
}

export default function App() {
  return (
    <div className="flex min-h-screen bg-[#e6e6e6] pt-[3px] pr-[5px] pb-[5px] pl-[2px]">
      <div className="relative flex flex-1 flex-col bg-white">
        <TopBar />
        <div className="flex flex-1 pt-[2px]">
          <div className="flex w-[35px] shrink-0 flex-col gap-[2px] pt-[2px] pr-px pl-px">
            <RailButton label="Presentar"><PresenterIcon /></RailButton>
            <RailButton label="Avanzar"><FastIcon /></RailButton>
            <div className="flex gap-px">
              <RailButton label="Subir"><DoubleUp /></RailButton>
              <RailButton label="Bajar"><DoubleDown /></RailButton>
            </div>
            {railItems.map((item) => (
              <RailButton key={item.label} label={item.label} bg={item.bg}>{item.icon}</RailButton>
            ))}
            <button type="button" aria-label="Manual" className="mt-auto flex justify-center pb-1"><BookIcon /></button>
          </div>
          <div className="flex min-w-0 flex-1 flex-col">
            <Ribbon />
            <div className="mt-[2px] flex flex-1 flex-col">
              <ToolStrip />
              <div className="flex flex-1">
                <SidePanel />
                <div className="flex min-w-0 flex-1 flex-col pt-1">
                  <main className="flex flex-1 border border-dashed border-[#666] font-['Liberation_Sans'] text-[11px] text-black">
                    <div className="min-w-0 flex-1">
                      <ClosingForm />
                      <Clauses />
                      <Issues />
                    </div>
                    <div className="flex w-4 flex-col items-center justify-between bg-[#f4f3f6] text-[#c5c5c5]">
                      <MdKeyboardArrowUp size={14} />
                      <MdKeyboardArrowDown size={14} />
                    </div>
                  </main>
                  <StatusBar />
                </div>
              </div>
            </div>
          </div>
        </div>
        {/* pointer */}
        <svg width="34" height="34" viewBox="0 0 34 34" className="absolute top-[641px] left-[159px]" aria-hidden="true">
          <path d="M3 3v27l6-5 4 0 5 5 6 1 2-3-4-4 4-2 6-2v-2z" fill="#fff" stroke="#000" strokeWidth="3" />
          <path d="M17 26l4 4M22 24l5 4" stroke="#000" strokeWidth="2" fill="none" />
        </svg>
      </div>
    </div>
  );
}
